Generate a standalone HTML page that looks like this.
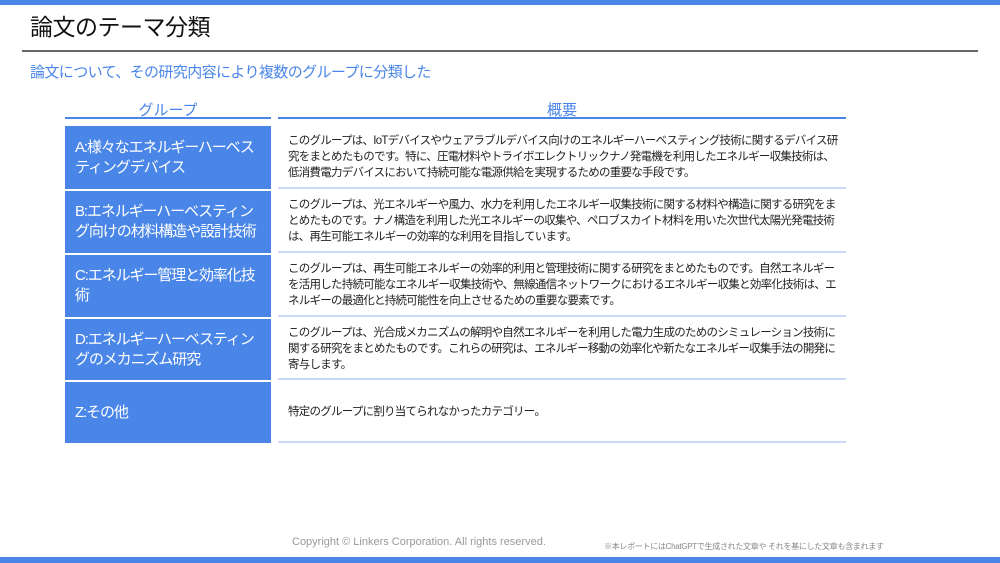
<!DOCTYPE html>
<html><head><meta charset="utf-8"><style>
body{margin:0;width:1000px;height:563px;position:relative;background:#fff;font-family:"Liberation Sans","Noto Sans CJK JP",sans-serif;overflow:hidden}
.a{position:absolute}
.cell{position:absolute;left:65px;width:206px;background:#4a86e8;color:#fff;font-size:15px;line-height:20px;padding:0 10px;box-sizing:border-box;display:flex;align-items:center;letter-spacing:-1.1px}
.desc{position:absolute;left:278px;width:568px;font-size:11.5px;line-height:16px;color:#222;padding-left:10px;padding-right:6px;box-sizing:border-box;display:flex;align-items:center;border-bottom:2px solid #c9daf8;letter-spacing:-0.75px}
</style></head><body>
<div class="a" style="left:0;top:0;width:1000px;height:5px;background:#4a86e8"></div>
<div class="a" style="left:30px;top:8px;font-size:23px;color:#111;letter-spacing:-0.5px">論文のテーマ分類</div>
<div class="a" style="left:22px;top:50px;width:956px;height:2px;background:#666"></div>
<div class="a" style="left:30px;top:61px;font-size:15px;color:#4a86e8;letter-spacing:-0.6px">論文について、その研究内容により複数のグループに分類した</div>
<div class="a" style="left:65px;top:99px;width:206px;text-align:center;font-size:15px;color:#4a86e8">グループ</div>
<div class="a" style="left:278px;top:99px;width:568px;text-align:center;font-size:15px;color:#4a86e8">概要</div>
<div class="a" style="left:65px;top:117px;width:206px;height:2px;background:#4a86e8"></div>
<div class="a" style="left:278px;top:117px;width:568px;height:2px;background:#4a86e8"></div>

<div class="cell" style="top:126px;height:63px">A:様々なエネルギーハーベスティングデバイス</div>
<div class="desc" style="top:126px;height:63px">このグループは、IoTデバイスやウェアラブルデバイス向けのエネルギーハーベスティング技術に関するデバイス研究をまとめたものです。特に、圧電材料やトライボエレクトリックナノ発電機を利用したエネルギー収集技術は、低消費電力デバイスにおいて持続可能な電源供給を実現するための重要な手段です。</div>

<div class="cell" style="top:191px;height:62px">B:エネルギーハーベスティング向けの材料構造や設計技術</div>
<div class="desc" style="top:191px;height:62px">このグループは、光エネルギーや風力、水力を利用したエネルギー収集技術に関する材料や構造に関する研究をまとめたものです。ナノ構造を利用した光エネルギーの収集や、ペロブスカイト材料を用いた次世代太陽光発電技術は、再生可能エネルギーの効率的な利用を目指しています。</div>

<div class="cell" style="top:255px;height:62px">C:エネルギー管理と効率化技術</div>
<div class="desc" style="top:255px;height:62px">このグループは、再生可能エネルギーの効率的利用と管理技術に関する研究をまとめたものです。自然エネルギーを活用した持続可能なエネルギー収集技術や、無線通信ネットワークにおけるエネルギー収集と効率化技術は、エネルギーの最適化と持続可能性を向上させるための重要な要素です。</div>

<div class="cell" style="top:319px;height:61px">D:エネルギーハーベスティングのメカニズム研究</div>
<div class="desc" style="top:319px;height:61px">このグループは、光合成メカニズムの解明や自然エネルギーを利用した電力生成のためのシミュレーション技術に関する研究をまとめたものです。これらの研究は、エネルギー移動の効率化や新たなエネルギー収集手法の開発に寄与します。</div>

<div class="cell" style="top:382px;height:61px">Z:その他</div>
<div class="desc" style="top:382px;height:61px">特定のグループに割り当てられなかったカテゴリー。</div>

<div class="a" style="left:292px;top:536px;font-size:11px;color:#999">Copyright © Linkers Corporation. All rights reserved.</div>
<div class="a" style="left:604px;top:541px;font-size:8px;color:#888;letter-spacing:-0.3px">※本レポートにはChatGPTで生成された文章や それを基にした文章も含まれます</div>
<div class="a" style="left:0;top:557px;width:1000px;height:6px;background:#4a86e8"></div>
</body></html>
